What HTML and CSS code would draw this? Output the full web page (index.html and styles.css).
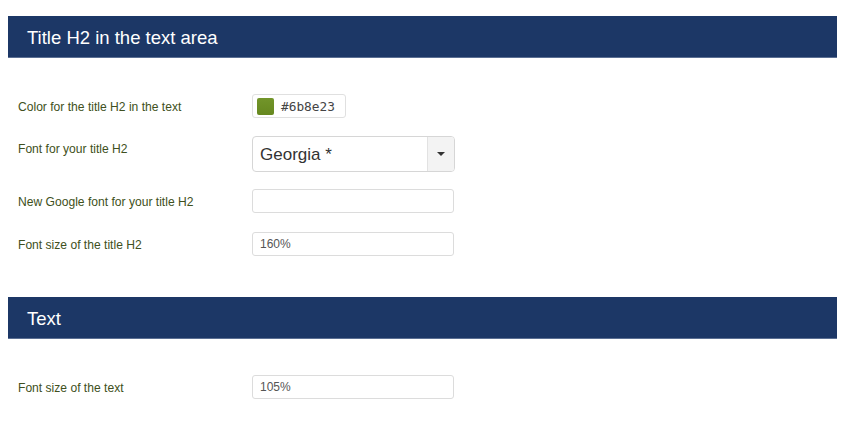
FILE: index.html
```html
<!DOCTYPE html>
<html>
<head>
<meta charset="utf-8">
<link rel="stylesheet" href="styles.css">
</head>
<body>
<section class="panel">
  <h2 class="panel-title">Title H2 in the text area</h2>
  <div class="form">
    <div class="row">
      <label class="label">Color for the title H2 in the text</label>
      <div class="color-input"><span class="swatch"></span><span class="hex">#6b8e23</span></div>
    </div>
    <div class="row">
      <label class="label">Font for your title H2</label>
      <div class="select"><span class="select-value">Georgia *</span><span class="select-btn"><span class="caret"></span></span></div>
    </div>
    <div class="row row-tight">
      <label class="label">New Google font for your title H2</label>
      <div class="text-input"></div>
    </div>
    <div class="row">
      <label class="label">Font size of the title H2</label>
      <div class="text-input">160%</div>
    </div>
  </div>
</section>
<section class="panel">
  <h2 class="panel-title">Text</h2>
  <div class="form">
    <div class="row">
      <label class="label">Font size of the text</label>
      <div class="text-input">105%</div>
    </div>
  </div>
</section>
</body>
</html>
```
FILE: styles.css
```css
* { box-sizing: border-box; }
html, body { margin: 0; background: #fff; }
body {
  padding: 16px 13px 0 8px;
  font-family: "Liberation Sans", Arial, sans-serif;
}
.panel-title {
  margin: 0;
  height: 42px;
  line-height: 44px;
  padding-left: 19px;
  background: #1c3766;
  color: #fff;
  font-size: 18.5px;
  font-weight: normal;
  border-bottom: 1px solid #5b6f93;
}
.form {
  display: flex;
  flex-direction: column;
  gap: 18px;
  padding: 36px 0 41px 10px;
}
.row {
  display: flex;
  align-items: flex-start;
}
.row-tight { margin-top: -1px; margin-bottom: 1px; }
.label {
  width: 234px;
  flex: none;
  padding-top: 5px;
  font-size: 12.1px;
  line-height: 16px;
  color: #405020;
}
.color-input {
  width: 94px;
  height: 24px;
  border: 1px solid #e0e0e0;
  border-radius: 3px;
  display: flex;
  align-items: center;
  padding-left: 4px;
  gap: 7px;
}
.swatch {
  width: 17px;
  height: 17px;
  border-radius: 2px;
  background: linear-gradient(#72952a, #66881f);
}
.hex {
  font-family: "DejaVu Sans Mono", monospace;
  font-size: 12.8px;
  color: #444;
}
.select {
  width: 203px;
  height: 36px;
  border: 1px solid #d6d6d6;
  border-radius: 4px;
  display: flex;
  overflow: hidden;
}
.select-value {
  flex: 1;
  padding-left: 7px;
  line-height: 35px;
  font-size: 17px;
  color: #333;
}
.select-btn {
  width: 27px;
  background: #f3f3f3;
  border-left: 1px solid #e2e2e2;
  display: flex;
  align-items: center;
  justify-content: center;
}
.caret {
  width: 0;
  height: 0;
  border-left: 4px solid transparent;
  border-right: 4px solid transparent;
  border-top: 4px solid #333;
}
.text-input {
  width: 202px;
  height: 24px;
  border: 1px solid #dcdcdc;
  border-radius: 3px;
  padding-left: 7px;
  line-height: 22px;
  font-size: 12px;
  color: #555;
}
```
